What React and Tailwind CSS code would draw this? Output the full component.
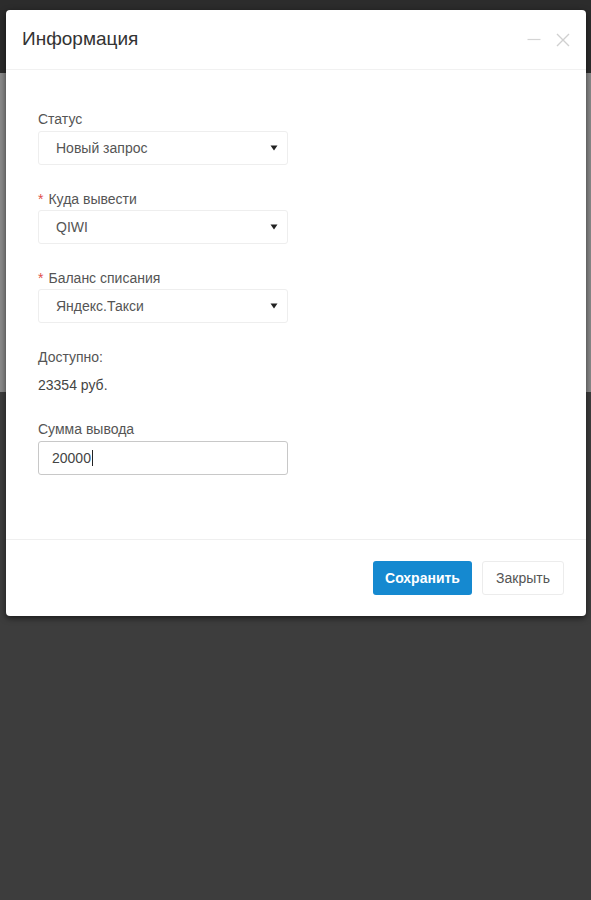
import React from "react";

function Caret() {
  return (
    <svg width="8" height="6" viewBox="0 0 8 6" className="shrink-0">
      <path d="M0.5 0.5 L7.5 0.5 L4 5.5 Z" fill="#222" />
    </svg>
  );
}

function SelectBox({ value }) {
  return (
    <div className="flex h-[34px] w-[250px] items-center justify-between rounded-[3px] border border-[#eeeeee] bg-white pl-[17px] pr-[9px] text-[14px] text-[#555]">
      <span>{value}</span>
      <Caret />
    </div>
  );
}

function Label({ children, required }) {
  return (
    <div className="h-5 text-[14px] leading-5 text-[#555]">
      {required && <span className="mr-[5px] text-[#e0504a]">*</span>}
      {children}
    </div>
  );
}

export default function App() {
  return (
    <div
      className="relative h-[900px] w-[591px] overflow-hidden bg-[#3d3d3d]"
      style={{ fontFamily: '"Liberation Sans", Arial, sans-serif' }}
    >
      <div className="h-[73px] bg-[#2c2c2c]" />
      <div className="h-[319px] bg-[#8a8a8a]" />

      <div className="absolute left-[6px] top-[10px] w-[580px] rounded-[4px] bg-white shadow-[0_2px_6px_rgba(0,0,0,0.6)]">
        <div className="flex h-[60px] items-center justify-between border-b border-[#f1f1f1] pl-4 pr-4">
          <span className="text-[19px] text-[#333]">Информация</span>
          <div className="flex items-center gap-[15px] text-[#cfcfcf]">
            <svg width="14" height="13" viewBox="0 0 14 13">
              <path d="M0.5 6.5 H13.5" stroke="#d4d4d4" strokeWidth="1.2" />
            </svg>
            <svg width="14" height="14" viewBox="0 0 14 14">
              <path d="M1 1 L13 13 M13 1 L1 13" stroke="#d0d0d0" strokeWidth="1.4" />
            </svg>
          </div>
        </div>

        <div className="flex flex-col px-8 pb-[64px] pt-[39px]">
          <Label>Статус</Label>
          <div className="mt-[2px]">
            <SelectBox value="Новый запрос" />
          </div>

          <div className="mt-6">
            <Label required>Куда вывести</Label>
          </div>
          <div className="mt-[1px]">
            <SelectBox value="QIWI" />
          </div>

          <div className="mt-6">
            <Label required>Баланс списания</Label>
          </div>
          <div className="mt-[1px]">
            <SelectBox value="Яндекс.Такси" />
          </div>

          <div className="mt-6">
            <Label>Доступно:</Label>
          </div>
          <div className="mt-2 h-5 text-[14px] leading-5 text-[#444]">23354 руб.</div>

          <div className="mt-6">
            <Label>Сумма вывода</Label>
          </div>
          <div className="mt-[2px] flex h-[34px] w-[250px] items-center rounded-[3px] border border-[#c8c8c8] bg-white pl-[13px] text-[14px] text-[#444]">
            <span>20000</span>
            <span className="ml-[1px] inline-block h-[16px] w-px bg-[#222]" />
          </div>
        </div>

        <div className="flex h-[77px] items-center justify-end gap-[10px] border-t border-[#efefef] pr-[22px]">
          <button className="h-[34px] w-[99px] rounded-[3px] bg-[#1589d0] text-[14px] font-bold text-white">
            Сохранить
          </button>
          <button className="h-[34px] w-[82px] rounded-[3px] border border-[#ececec] bg-white text-[14px] text-[#555]">
            Закрыть
          </button>
        </div>
      </div>
    </div>
  );
}
